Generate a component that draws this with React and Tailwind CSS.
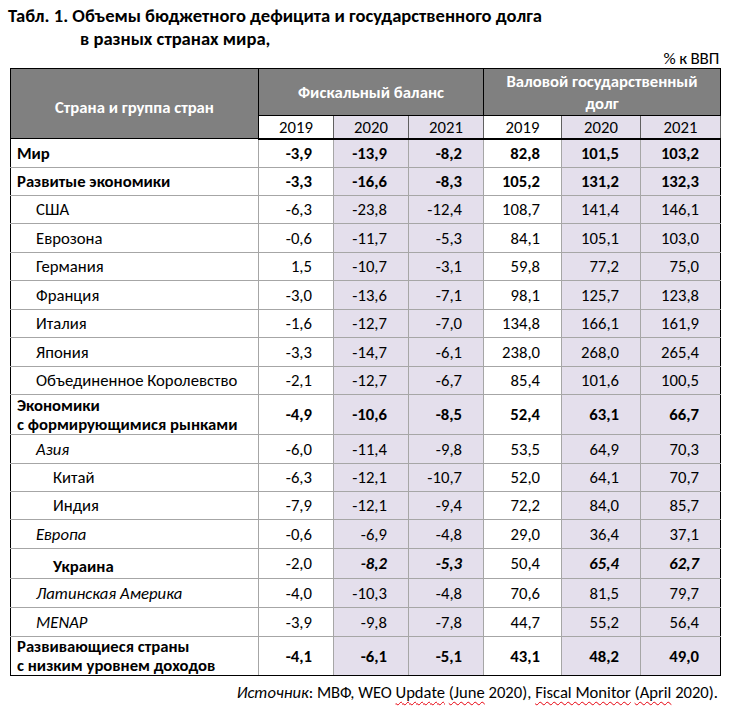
import React from "react";

const rows = [
  { label: "Мир", ind: 0, bold: true, h: 29, v: ["-3,9", "-13,9", "-8,2", "82,8", "101,5", "103,2"] },
  { label: "Развитые экономики", ind: 0, bold: true, h: 28, v: ["-3,3", "-16,6", "-8,3", "105,2", "131,2", "132,3"] },
  { label: "США", ind: 1, h: 28, v: ["-6,3", "-23,8", "-12,4", "108,7", "141,4", "146,1"] },
  { label: "Еврозона", ind: 1, h: 29, v: ["-0,6", "-11,7", "-5,3", "84,1", "105,1", "103,0"] },
  { label: "Германия", ind: 1, h: 28, v: ["1,5", "-10,7", "-3,1", "59,8", "77,2", "75,0"] },
  { label: "Франция", ind: 1, h: 29, v: ["-3,0", "-13,6", "-7,1", "98,1", "125,7", "123,8"] },
  { label: "Италия", ind: 1, h: 28, v: ["-1,6", "-12,7", "-7,0", "134,8", "166,1", "161,9"] },
  { label: "Япония", ind: 1, h: 29, v: ["-3,3", "-14,7", "-6,1", "238,0", "268,0", "265,4"] },
  { label: "Объединенное Королевство", ind: 1, h: 28, v: ["-2,1", "-12,7", "-6,7", "85,4", "101,6", "100,5"] },
  { label: ["Экономики", "с формирующимися рынками"], ind: 0, bold: true, h: 40, v: ["-4,9", "-10,6", "-8,5", "52,4", "63,1", "66,7"] },
  { label: "Азия", ind: 1, italic: true, h: 29, v: ["-6,0", "-11,4", "-9,8", "53,5", "64,9", "70,3"] },
  { label: "Китай", ind: 2, h: 28, v: ["-6,3", "-12,1", "-10,7", "52,0", "64,1", "70,7"] },
  { label: "Индия", ind: 2, h: 28, v: ["-7,9", "-12,1", "-9,4", "72,2", "84,0", "85,7"] },
  { label: "Европа", ind: 1, italic: true, h: 29, v: ["-0,6", "-6,9", "-4,8", "29,0", "36,4", "37,1"] },
  { label: "Украина", ind: 2, bold: true, ukr: true, h: 30, v: ["-2,0", "-8,2", "-5,3", "50,4", "65,4", "62,7"] },
  { label: "Латинская Америка", ind: 1, italic: true, h: 29, v: ["-4,0", "-10,3", "-4,8", "70,6", "81,5", "79,7"] },
  { label: "MENAP", ind: 1, italic: true, h: 29, v: ["-3,9", "-9,8", "-7,8", "44,7", "55,2", "56,4"] },
  { label: ["Развивающиеся страны", "с низким уровнем доходов"], ind: 0, bold: true, h: 39, v: ["-4,1", "-6,1", "-5,1", "43,1", "48,2", "49,0"] },
];

const shade = [false, true, true, false, true, true];
const indCls = ["pl-[6px]", "pl-[25px]", "pl-[42px]"];
const wavy = "underline decoration-wavy decoration-red-600 decoration-1 underline-offset-[3px]";

export default function App() {
  return (
    <div
      className="w-[735px] h-[714px] bg-white text-black relative overflow-hidden"
      style={{ fontFamily: "Calibri, Carlito, 'Open Sans', sans-serif" }}
    >
      <div className="pt-[4px] pl-[8px] text-[18.6px] font-bold leading-[23px]">
        <div>Табл. 1. Объемы бюджетного дефицита и государственного долга</div>
        <div className="pl-[72px]">в разных странах мира,</div>
      </div>
      <div className="text-right pr-[16px] text-[17px] leading-[18px] tracking-[-0.2px]">% к ВВП</div>
      <table className="ml-[10px] border-collapse border border-black table-fixed w-[710px] text-[16.7px]">
        <colgroup>
          <col className="w-[248px]" />
          <col className="w-[75px]" />
          <col className="w-[75px]" />
          <col className="w-[75px]" />
          <col className="w-[78px]" />
          <col className="w-[79px]" />
          <col className="w-[80px]" />
        </colgroup>
        <thead>
          <tr className="h-[47px]">
            <th rowSpan={2} className="bg-[#808080] text-white font-bold border border-black text-center align-middle pt-[8px]">
              Страна и группа стран
            </th>
            <th colSpan={3} className="bg-[#808080] text-white font-bold border border-black text-center align-middle leading-[20px]">
              Фискальный баланс
            </th>
            <th colSpan={3} className="bg-[#808080] text-white font-bold border border-black text-center align-middle leading-[22px]">
              Валовой государственный
              <br />
              долг
            </th>
          </tr>
          <tr className="h-[23px]">
            {["2019", "2020", "2021", "2019", "2020", "2021"].map((y, i) => (
              <th
                key={i}
                className={`font-normal text-center border border-[#606060] border-b-2 border-b-black leading-[20px] ${
                  shade[i] ? "bg-[#e4dfec]" : "bg-white"
                }`}
              >
                {y}
              </th>
            ))}
          </tr>
        </thead>
        <tbody>
          {rows.map((r, ri) => (
            <tr key={ri} style={{ height: r.h }}>
              <td
                className={`border border-[#a6a6a6] border-l-black align-middle leading-[19px] ${indCls[r.ind]} ${
                  r.bold ? "font-bold" : ""
                } ${r.italic ? "italic" : ""} ${r.ukr ? "pt-[6px]" : ""} ${ri === rows.length - 1 ? "border-b-black" : ""}`}
              >
                {Array.isArray(r.label) ? (
                  <>
                    <div>{r.label[0]}</div>
                    <div>{r.label[1]}</div>
                  </>
                ) : (
                  r.label
                )}
              </td>
              {r.v.map((val, ci) => {
                const b = r.bold && !r.ukr;
                const ukrBI = r.ukr && ci !== 0 && ci !== 3;
                return (
                  <td
                    key={ci}
                    className={`border border-[#a6a6a6] text-right pr-[21px] align-middle leading-[19px] ${
                      shade[ci] ? "bg-[#e4dfec]" : "bg-white"
                    } ${b ? "font-bold" : ""} ${ukrBI ? "font-bold italic" : ""} ${
                      ci === 5 ? "border-r-black" : ""
                    } ${ri === rows.length - 1 ? "border-b-black" : ""}`}
                  >
                    {val}
                  </td>
                );
              })}
            </tr>
          ))}
        </tbody>
      </table>
      <div className="text-right pr-[17px] pt-[6px] text-[16.6px] leading-[20px]">
        <span className="italic">Источник</span>: МВФ, WEO <span className={wavy}>Update</span>{" "}
        <span className={wavy}>(June</span> 2020), <span className={wavy}>Fiscal Monitor</span>{" "}
        <span className={wavy}>(April</span> 2020).
      </div>
    </div>
  );
}
